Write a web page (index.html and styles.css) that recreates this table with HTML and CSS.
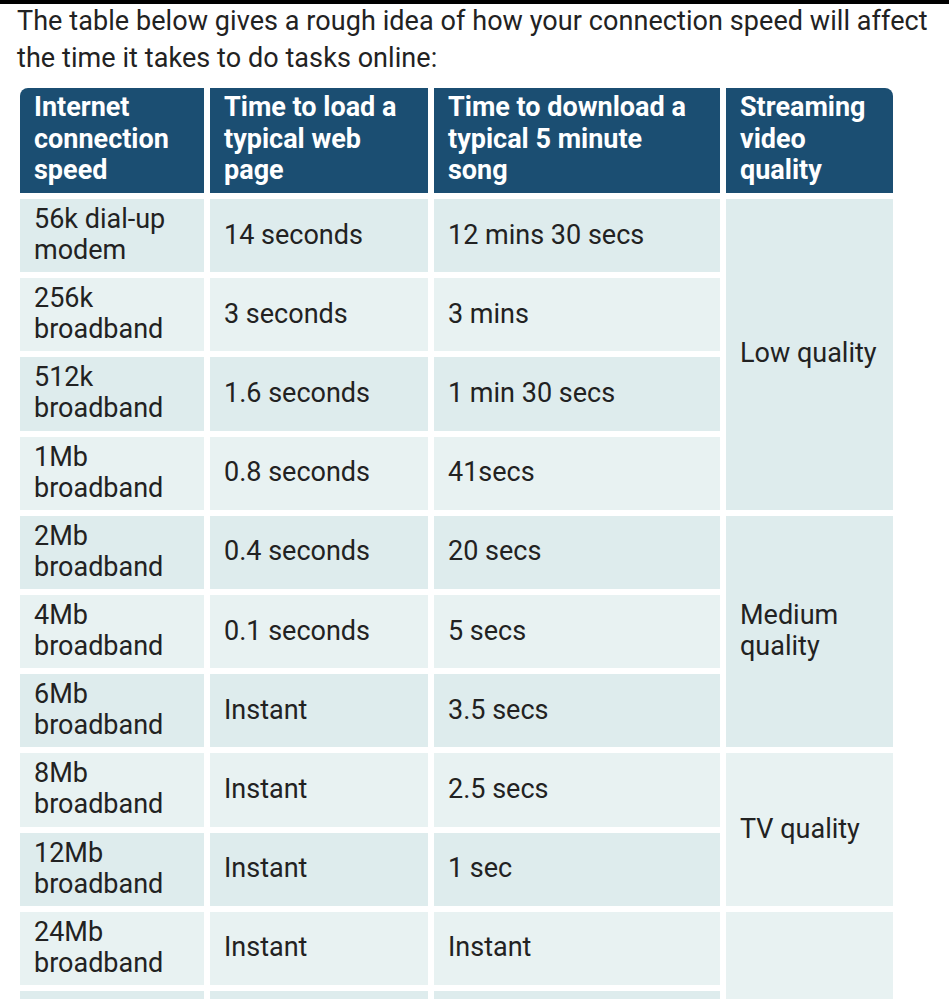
FILE: index.html
```html
<!DOCTYPE html>
<html lang="en">
<head>
<meta charset="utf-8">
<title>Connection speed table</title>
<link rel="stylesheet" href="styles.css">
</head>
<body>
<div class="topbar"></div>
<main class="page">
  <p class="intro">The table below gives a rough idea of how your connection speed will affect the time it takes to do tasks online:</p>
  <div class="speed-table" role="table">
    <div class="th first">Internet connection speed</div>
    <div class="th">Time to load a typical web page</div>
    <div class="th">Time to download a typical 5 minute song</div>
    <div class="th last">Streaming video quality</div>

    <div class="td a">56k dial-up modem</div>
    <div class="td a mid">14 seconds</div>
    <div class="td a mid">12 mins 30 secs</div>
    <div class="td a mid span4">Low quality</div>

    <div class="td b">256k broadband</div>
    <div class="td b mid">3 seconds</div>
    <div class="td b mid">3 mins</div>

    <div class="td a">512k broadband</div>
    <div class="td a mid">1.6 seconds</div>
    <div class="td a mid">1 min 30 secs</div>

    <div class="td b">1Mb broadband</div>
    <div class="td b mid">0.8 seconds</div>
    <div class="td b mid">41secs</div>

    <div class="td a">2Mb broadband</div>
    <div class="td a mid">0.4 seconds</div>
    <div class="td a mid">20 secs</div>
    <div class="td a mid span3">Medium quality</div>

    <div class="td b">4Mb broadband</div>
    <div class="td b mid">0.1 seconds</div>
    <div class="td b mid">5 secs</div>

    <div class="td a">6Mb broadband</div>
    <div class="td a mid">Instant</div>
    <div class="td a mid">3.5 secs</div>

    <div class="td b">8Mb broadband</div>
    <div class="td b mid">Instant</div>
    <div class="td b mid">2.5 secs</div>
    <div class="td b mid span2">TV quality</div>

    <div class="td a">12Mb broadband</div>
    <div class="td a mid">Instant</div>
    <div class="td a mid">1 sec</div>

    <div class="td b">24Mb broadband</div>
    <div class="td b mid">Instant</div>
    <div class="td b mid">Instant</div>
    <div class="td b mid span3">HD quality</div>

    <div class="td a">40Mb broadband</div>
    <div class="td a mid">Instant</div>
    <div class="td a mid">Instant</div>

    <div class="td b">100Mb broadband</div>
    <div class="td b mid">Instant</div>
    <div class="td b mid">Instant</div>
  </div>
</main>
</body>
</html>
```

FILE: styles.css
```css
html, body {
  margin: 0;
  padding: 0;
  background: #ffffff;
}

body {
  font-family: Roboto, "Liberation Sans", Arial, sans-serif;
  color: #222222;
}

.topbar {
  height: 4px;
  background: #000000;
}

.page {
  padding: 0 6px 0 17px;
}

.intro {
  margin: -1px 0 11px 0;
  font-size: 27px;
  letter-spacing: 0.07px;
  line-height: 37px;
}

.speed-table {
  display: grid;
  grid-template-columns: 184px 218px 286px 167px;
  grid-template-rows: 105px;
  grid-auto-rows: 73.2px;
  gap: 6px;
  margin-left: 3px;
  font-size: 27px;
}

.th {
  background: #1b4e72;
  color: #ffffff;
  font-weight: 700;
  line-height: 31.5px;
  padding: 4px 14px 0 14px;
}

.th.first {
  border-top-left-radius: 8px;
}

.th.last {
  border-top-right-radius: 8px;
}

.td {
  display: flex;
  align-items: center;
  padding: 0 14px 1px 14px;
  line-height: 31px;
}

.td.a {
  background: #deeced;
}

.td.b {
  background: #e8f2f2;
}

.span4 {
  grid-column: 4;
  grid-row: span 4;
}

.span3 {
  grid-column: 4;
  grid-row: span 3;
}

.span2 {
  grid-column: 4;
  grid-row: span 2;
}
```
